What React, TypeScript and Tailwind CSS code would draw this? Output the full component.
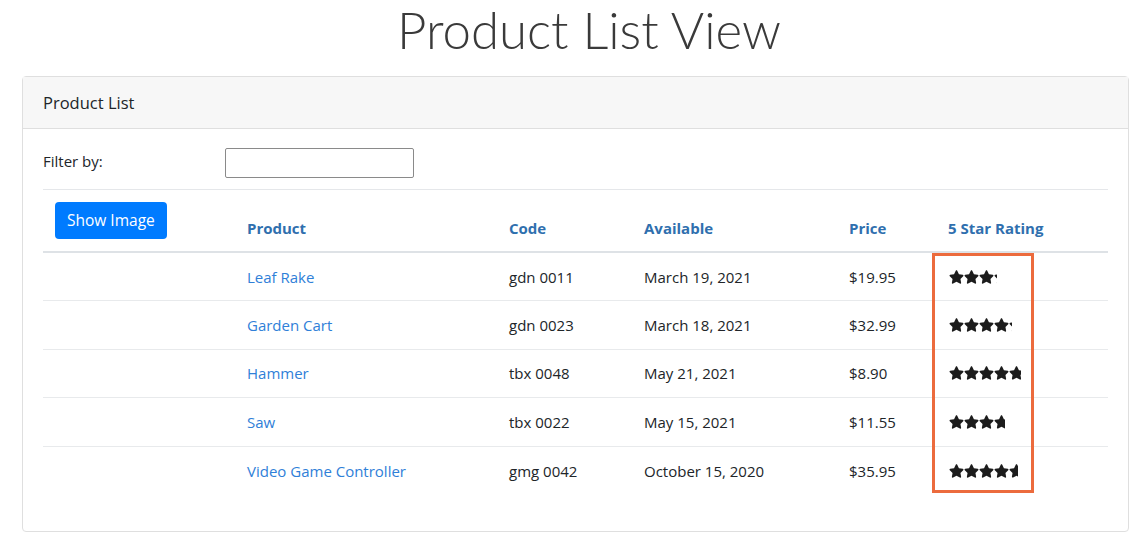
import React from "react";

const rows = [
  { name: "Leaf Rake", code: "gdn 0011", date: "March 19, 2021", price: "$19.95", rating: 3.2 },
  { name: "Garden Cart", code: "gdn 0023", date: "March 18, 2021", price: "$32.99", rating: 4.2 },
  { name: "Hammer", code: "tbx 0048", date: "May 21, 2021", price: "$8.90", rating: 4.8 },
  { name: "Saw", code: "tbx 0022", date: "May 15, 2021", price: "$11.55", rating: 3.7 },
  { name: "Video Game Controller", code: "gmg 0042", date: "October 15, 2020", price: "$35.95", rating: 4.6 },
];

function Star() {
  return (
    <svg width="15" height="14" viewBox="0 0 576 512" className="shrink-0">
      <path
        d="M259.3 17.8L194 150.2 47.9 171.5c-26.2 3.8-36.7 36.1-17.7 54.6l105.7 103-25 145.5c-4.5 26.3 23.2 46 46.4 33.7L288 439.6l130.7 68.7c23.2 12.2 50.9-7.4 46.4-33.7l-25-145.5 105.7-103c19-18.5 8.5-50.8-17.7-54.6L382 150.2 316.7 17.8c-11.7-23.6-45.6-23.9-57.4 0z"
        fill="#1c1c1c"
      />
    </svg>
  );
}

function Stars({ rating }: { rating: number }) {
  return (
    <div className="overflow-hidden flex" style={{ width: rating * 15 }}>
      <div className="flex shrink-0 w-[75px]">
        <Star />
        <Star />
        <Star />
        <Star />
        <Star />
      </div>
    </div>
  );
}

export default function App() {
  return (
    <div className="w-[1145px] h-[543px] bg-white overflow-hidden text-[#212529]" style={{ fontFamily: "'Open Sans', 'Noto Sans', sans-serif" }}>
      <h1
        className="text-center pl-[33px] text-[51px] leading-[60px] font-light text-[#3a3a3a] mb-[16px]"
        style={{ fontFamily: "Lato, sans-serif" }}
      >
        Product List View
      </h1>
      <div className="ml-[22px] w-[1107px] border border-[#dfdfdf] rounded-[4px]">
        <div className="bg-[#f7f7f7] border-b border-[#dfdfdf] px-[20px] py-[12px] text-[16.5px] leading-[27px]">
          Product List
        </div>
        <div className="px-[20px] pt-[19px] pb-[36px]">
          <div className="flex items-center h-[30px] mb-[11px]">
            <div className="w-[182px] text-[15px] pb-[4px]">Filter by:</div>
            <input className="w-[189px] h-[30px] border border-[#8a8a8a] rounded-[2px]" />
          </div>
          <div className="relative">
            <table className="w-[1065px] table-fixed border-collapse text-[15px]">
              <colgroup>
                <col className="w-[192px]" />
                <col className="w-[262px]" />
                <col className="w-[135px]" />
                <col className="w-[205px]" />
                <col className="w-[99px]" />
                <col className="w-[172px]" />
              </colgroup>
              <thead>
                <tr className="border-t border-[#e5e7ea] border-b-2 border-b-[#dee2e6]">
                  <th className="p-[12px] text-left align-bottom">
                    <button className="bg-[#007bff] text-white rounded-[4px] px-[12px] h-[37px] text-[15.5px] font-normal">
                      Show Image
                    </button>
                  </th>
                  {["Product", "Code", "Available", "Price", "5 Star Rating"].map((h) => (
                    <th key={h} className="px-[12px] pb-[11px] text-left align-bottom font-bold text-[#2f6fae] leading-[24px]">
                      {h}
                    </th>
                  ))}
                </tr>
              </thead>
              <tbody>
                {rows.map((r, i) => (
                  <tr key={r.name} className={i < rows.length - 1 ? "border-b border-[#e8eaec]" : ""}>
                    <td className="px-[12px] h-[48.5px]"></td>
                    <td className="px-[12px] text-[#2f80d8] leading-[24px]">{r.name}</td>
                    <td className="px-[12px] leading-[24px]">{r.code}</td>
                    <td className="px-[12px] leading-[24px]">{r.date}</td>
                    <td className="px-[12px] leading-[24px]">{r.price}</td>
                    <td className="px-[12px] pl-[13px]">
                      <Stars rating={r.rating} />
                    </td>
                  </tr>
                ))}
              </tbody>
            </table>
            <div className="absolute left-[889px] top-[64px] w-[102px] h-[240px] border-[3px] border-[#ec6b3d] pointer-events-none" />
          </div>
        </div>
      </div>
    </div>
  );
}
